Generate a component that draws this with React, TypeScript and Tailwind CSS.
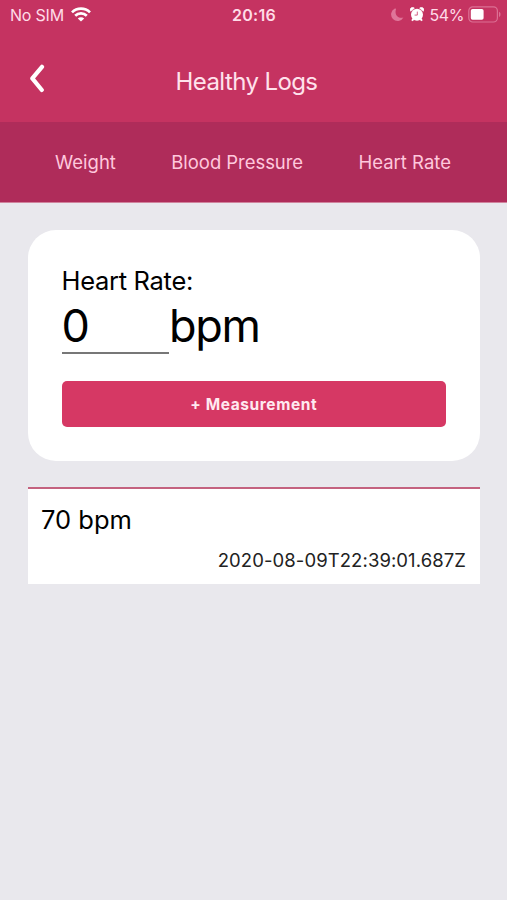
import React from 'react';

interface Measurement {
    value: number;
    date: string;
}

const logs: Measurement[] = [{ value: 70, date: '2020-08-09T22:39:01.687Z' }];

const StatusBar: React.FC = () => (
    <div className="flex h-[30px] items-center justify-between pl-[10px] pr-[7px] text-[16px] leading-[30px] text-[#ffdce8]">
        <div className="flex w-[150px] items-center gap-[7px]">
            <span className="tracking-[-0.2px]">No SIM</span>
            <svg className="-mt-[2px]" width="20" height="15" viewBox="0 0 20 15" fill="none" stroke="#fff" strokeWidth="2.7">
                <path d="M1 5.4a12.8 12.8 0 0 1 18 0" />
                <path d="M4.2 8.8a8.3 8.3 0 0 1 11.6 0" />
                <path d="M10 14.6 6.8 11.5a4.6 4.6 0 0 1 6.4 0Z" fill="#fff" stroke="none" />
            </svg>
        </div>
        <span className="-ml-[2px] font-semibold tracking-[0.3px]">20:16</span>
        <div className="flex w-[150px] items-center justify-end">
            <svg className="mr-[6px]" width="14" height="14" viewBox="0 0 14 14" fill="#df7599">
                <path d="M4.8.6A6.5 6.5 0 1 0 13.4 9.4C9.4 11.2 3.9 7.6 6 1.2 6.2.6 5.5.3 4.8.6Z" />
            </svg>
            <svg className="-mt-[2px] mr-[5px]" width="14" height="15" viewBox="0 0 14 15" fill="#fff">
                <circle cx="7" cy="7.8" r="6" />
                <path d="M.7 4.3A2.3 2.3 0 0 1 4.4 1.2ZM13.3 4.3A2.3 2.3 0 0 0 9.6 1.2Z" stroke="#fff" strokeWidth="0.6" />
                <path d="m3.4 11.8-1.3 2M10.6 11.8l1.3 2" stroke="#fff" strokeWidth="2" />
                <path d="M7.3 4.6v3.5H4.6" fill="none" stroke="#cf5079" strokeWidth="0.9" />
            </svg>
            <span className="mr-[4px] tracking-[-0.4px]">54%</span>
            <svg className="-mt-[2px] -mr-[1px]" width="33" height="17" viewBox="0 0 33 17">
                <rect x="0.8" y="0.8" width="28.6" height="15.2" rx="4" fill="none" stroke="#dc7094" strokeWidth="1.2" />
                <rect x="2.8" y="3" width="12.8" height="10.8" rx="1.8" fill="#fff" />
                <path d="M31 5.8c2 .8 2 4.4 0 5.2Z" fill="#dc7094" />
            </svg>
        </div>
    </div>
);

const Header: React.FC = () => (
    <header className="grid h-[92px] grid-cols-[60px_1fr_74px]">
        <button className="flex items-start pl-[29px] pt-[34px]" aria-label="Back">
            <svg width="16" height="29" viewBox="0 0 16 29" fill="none" stroke="#fff" strokeWidth="4.2" strokeLinecap="round" strokeLinejoin="round">
                <path d="M13 2.8 3.3 14.4 12.8 26" />
            </svg>
        </button>
        <h1 className="pt-[36px] text-center text-[24px] leading-[32px] tracking-[-0.6px] text-[#ffe2ec]">Healthy Logs</h1>
    </header>
);

const Tabs: React.FC = () => (
    <nav className="flex h-[81px] items-center justify-between border-b border-[#d0839d] bg-[#af2c5a] pl-[55px] pr-[56px] pt-[2px] text-[18.5px] text-[#ffc8dd]">
        <button>Weight</button>
        <button className="tracking-[-0.05px]">Blood Pressure</button>
        <button>Heart Rate</button>
    </nav>
);

export default function App() {
    return (
        <div className="min-h-[900px] bg-[#e9e8ed] font-['Inter',sans-serif]">
            <div className="bg-[#c53361]">
                <StatusBar />
                <Header />
                <Tabs />
            </div>

            <main className="pl-[28px] pr-[27px] pt-[27px]">
                <section className="h-[231px] rounded-[28px] bg-white pl-[33.5px] pr-[34px] pt-[34px] text-black">
                    <div className="text-[25.5px] leading-[34px] tracking-[-0.3px]">Heart Rate:</div>
                    <div className="flex text-[45px] leading-[56px]">
                        <div className="h-[56px] w-[107.5px] border-b-2 border-[#777]">0</div>
                        <span className="tracking-[-1.3px]">bpm</span>
                    </div>
                    <button className="mt-[27px] h-[46px] w-full rounded-[5px] bg-[#d63864] pt-[2px] text-[15.5px] font-bold tracking-[0.6px] text-[#ffe9f0]">
                        + Measurement
                    </button>
                </section>

                {logs.map((log) => (
                    <div key={log.date} className="mt-[26px] h-[97px] border-t-2 border-[#c4627f] bg-white pl-[13px] pr-[14px] pt-[14px]">
                        <div className="text-[25.5px] leading-[34px] text-black">{log.value} bpm</div>
                        <div className="mt-[10px] text-right text-[18.5px] leading-[26px] tracking-[0.08px] text-[#222]">{log.date}</div>
                    </div>
                ))}
            </main>
        </div>
    );
}
